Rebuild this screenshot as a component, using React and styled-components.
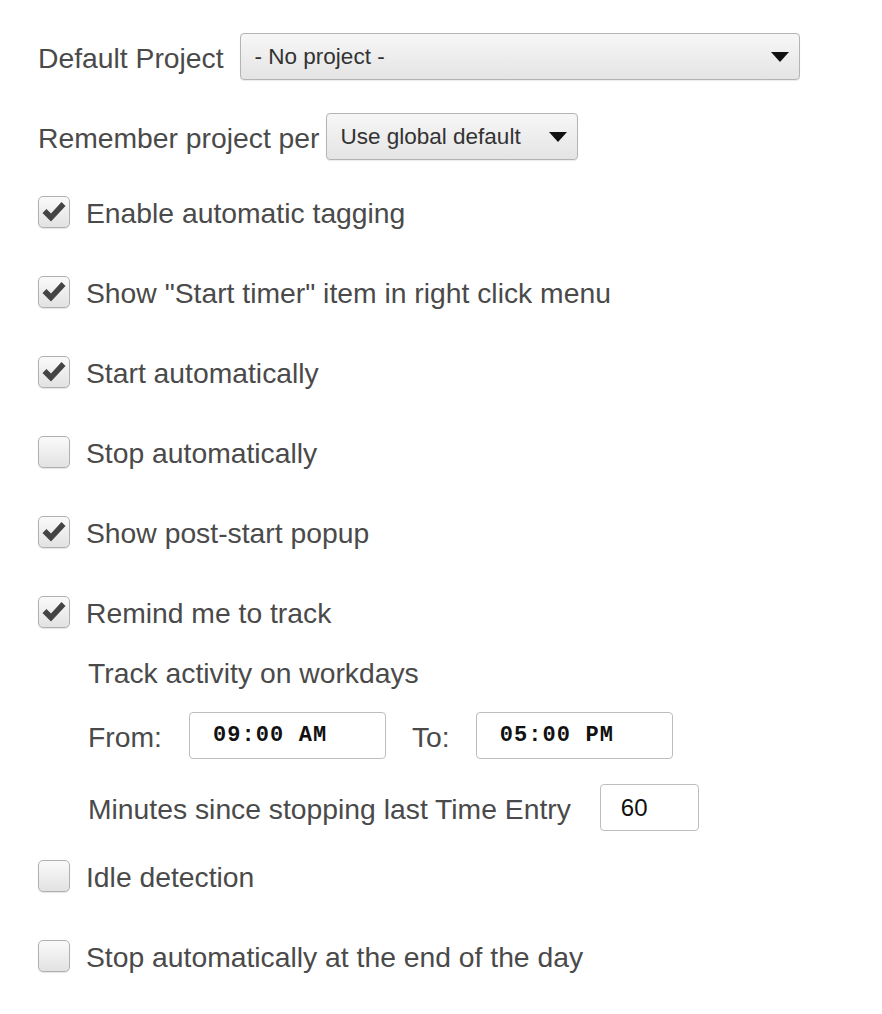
import React, { useState } from 'react'
import styled, { createGlobalStyle } from 'styled-components'

const GlobalStyle = createGlobalStyle`
    body {
        margin: 0;
        background: #fff;
        font-family: "Liberation Sans", Arial, Helvetica, sans-serif;
        color: #4a4a4a;
    }
`;

const Form = styled.div`
    display: flex;
    flex-direction: column;
    padding: 33px 0 40px 38px;
    font-size: 28.3px;
`;

const Row = styled.div`
    display: flex;
    align-items: center;
    height: ${props => props.h || 40}px;
    margin-top: ${props => props.mt || 0}px;
    padding-left: ${props => props.indent || 0}px;
`;

const Label = styled.span`
    white-space: nowrap;
    padding-top: 3px;
    margin-right: ${props => props.gap || 0}px;
`;

const Select = styled.div`
    display: flex;
    align-items: center;
    justify-content: space-between;
    box-sizing: border-box;
    width: ${props => props.w}px;
    height: 47px;
    padding: 0 10px 0 14px;
    border: 1.5px solid #b4b4b4;
    border-radius: 4px;
    background: linear-gradient(#f7f7f7, #e4e4e4);
    box-shadow: 0 1px 1px rgba(0, 0, 0, 0.08);
    color: #333;
    font-size: 22.5px;
    cursor: pointer;
`;

const Arrow = styled.span`
    width: 0;
    height: 0;
    border-left: 9px solid transparent;
    border-right: 9px solid transparent;
    border-top: 10px solid #111;
`;

const Box = styled.span`
    display: flex;
    align-items: center;
    justify-content: center;
    box-sizing: border-box;
    width: 32px;
    height: 32px;
    margin-right: 16px;
    border: 1.5px solid #b0b0b0;
    border-radius: 5px;
    background: linear-gradient(#fafafa, #e2e2e2);
    box-shadow: 0 1px 1px rgba(0, 0, 0, 0.1);
    cursor: pointer;
`;

const Field = styled.div`
    display: flex;
    align-items: center;
    box-sizing: border-box;
    width: ${props => props.w}px;
    height: 47px;
    padding-left: ${props => props.pl || 20}px;
    border: 1.5px solid #bdbdbd;
    border-radius: 4px;
    background: #fff;
    color: #111;
    font-family: ${props => props.mono ? '"Liberation Mono", "Courier New", monospace' : 'inherit'};
    font-weight: ${props => props.mono ? 700 : 400};
    font-size: ${props => props.mono ? 22 : 24}px;
    letter-spacing: ${props => props.mono ? 1.1 : 0}px;
`;

const Check = () => (
    <svg width="26" height="24" viewBox="0 0 26 24">
        <path d="M1.5 13 L5.5 9 L10 13.5 L20.5 2 L24.5 6 L10 21.5 Z" fill="#444" />
    </svg>
);

const CheckRow = ({ label, checked, mt }) => {
    const [on, setOn] = useState(checked);
    return (
        <Row mt={mt}>
            <Box onClick={() => setOn(!on)}>{on && <Check />}</Box>
            <Label>{label}</Label>
        </Row>
    );
};

const App = () => {
    return (
        <>
            <GlobalStyle />
            <Form>
                <Row h={47}>
                    <Label gap={16}>Default Project</Label>
                    <Select w={560}><span>- No project -</span><Arrow /></Select>
                </Row>
                <Row h={47} mt={33}>
                    <Label gap={6}>Remember project per</Label>
                    <Select w={252}><span>Use global default</span><Arrow /></Select>
                </Row>
                <CheckRow mt={32} checked label="Enable automatic tagging" />
                <CheckRow mt={40} checked label={'Show "Start timer" item in right click menu'} />
                <CheckRow mt={40} checked label="Start automatically" />
                <CheckRow mt={40} label="Stop automatically" />
                <CheckRow mt={40} checked label="Show post-start popup" />
                <CheckRow mt={40} checked label="Remind me to track" />
                <Row mt={20} indent={50}>
                    <Label>Track activity on workdays</Label>
                </Row>
                <Row h={47} mt={20} indent={50}>
                    <Label gap={27}>From:</Label>
                    <Field w={197} mono pl={23}>09:00 AM</Field>
                    <Label gap={26} style={{ marginLeft: 26 }}>To:</Label>
                    <Field w={197} mono pl={23}>05:00 PM</Field>
                </Row>
                <Row h={47} mt={25} indent={50}>
                    <Label gap={29}>Minutes since stopping last Time Entry</Label>
                    <Field w={99}>60</Field>
                </Row>
                <CheckRow mt={25} label="Idle detection" />
                <CheckRow mt={40} label="Stop automatically at the end of the day" />
            </Form>
        </>
    )
}

export default App
